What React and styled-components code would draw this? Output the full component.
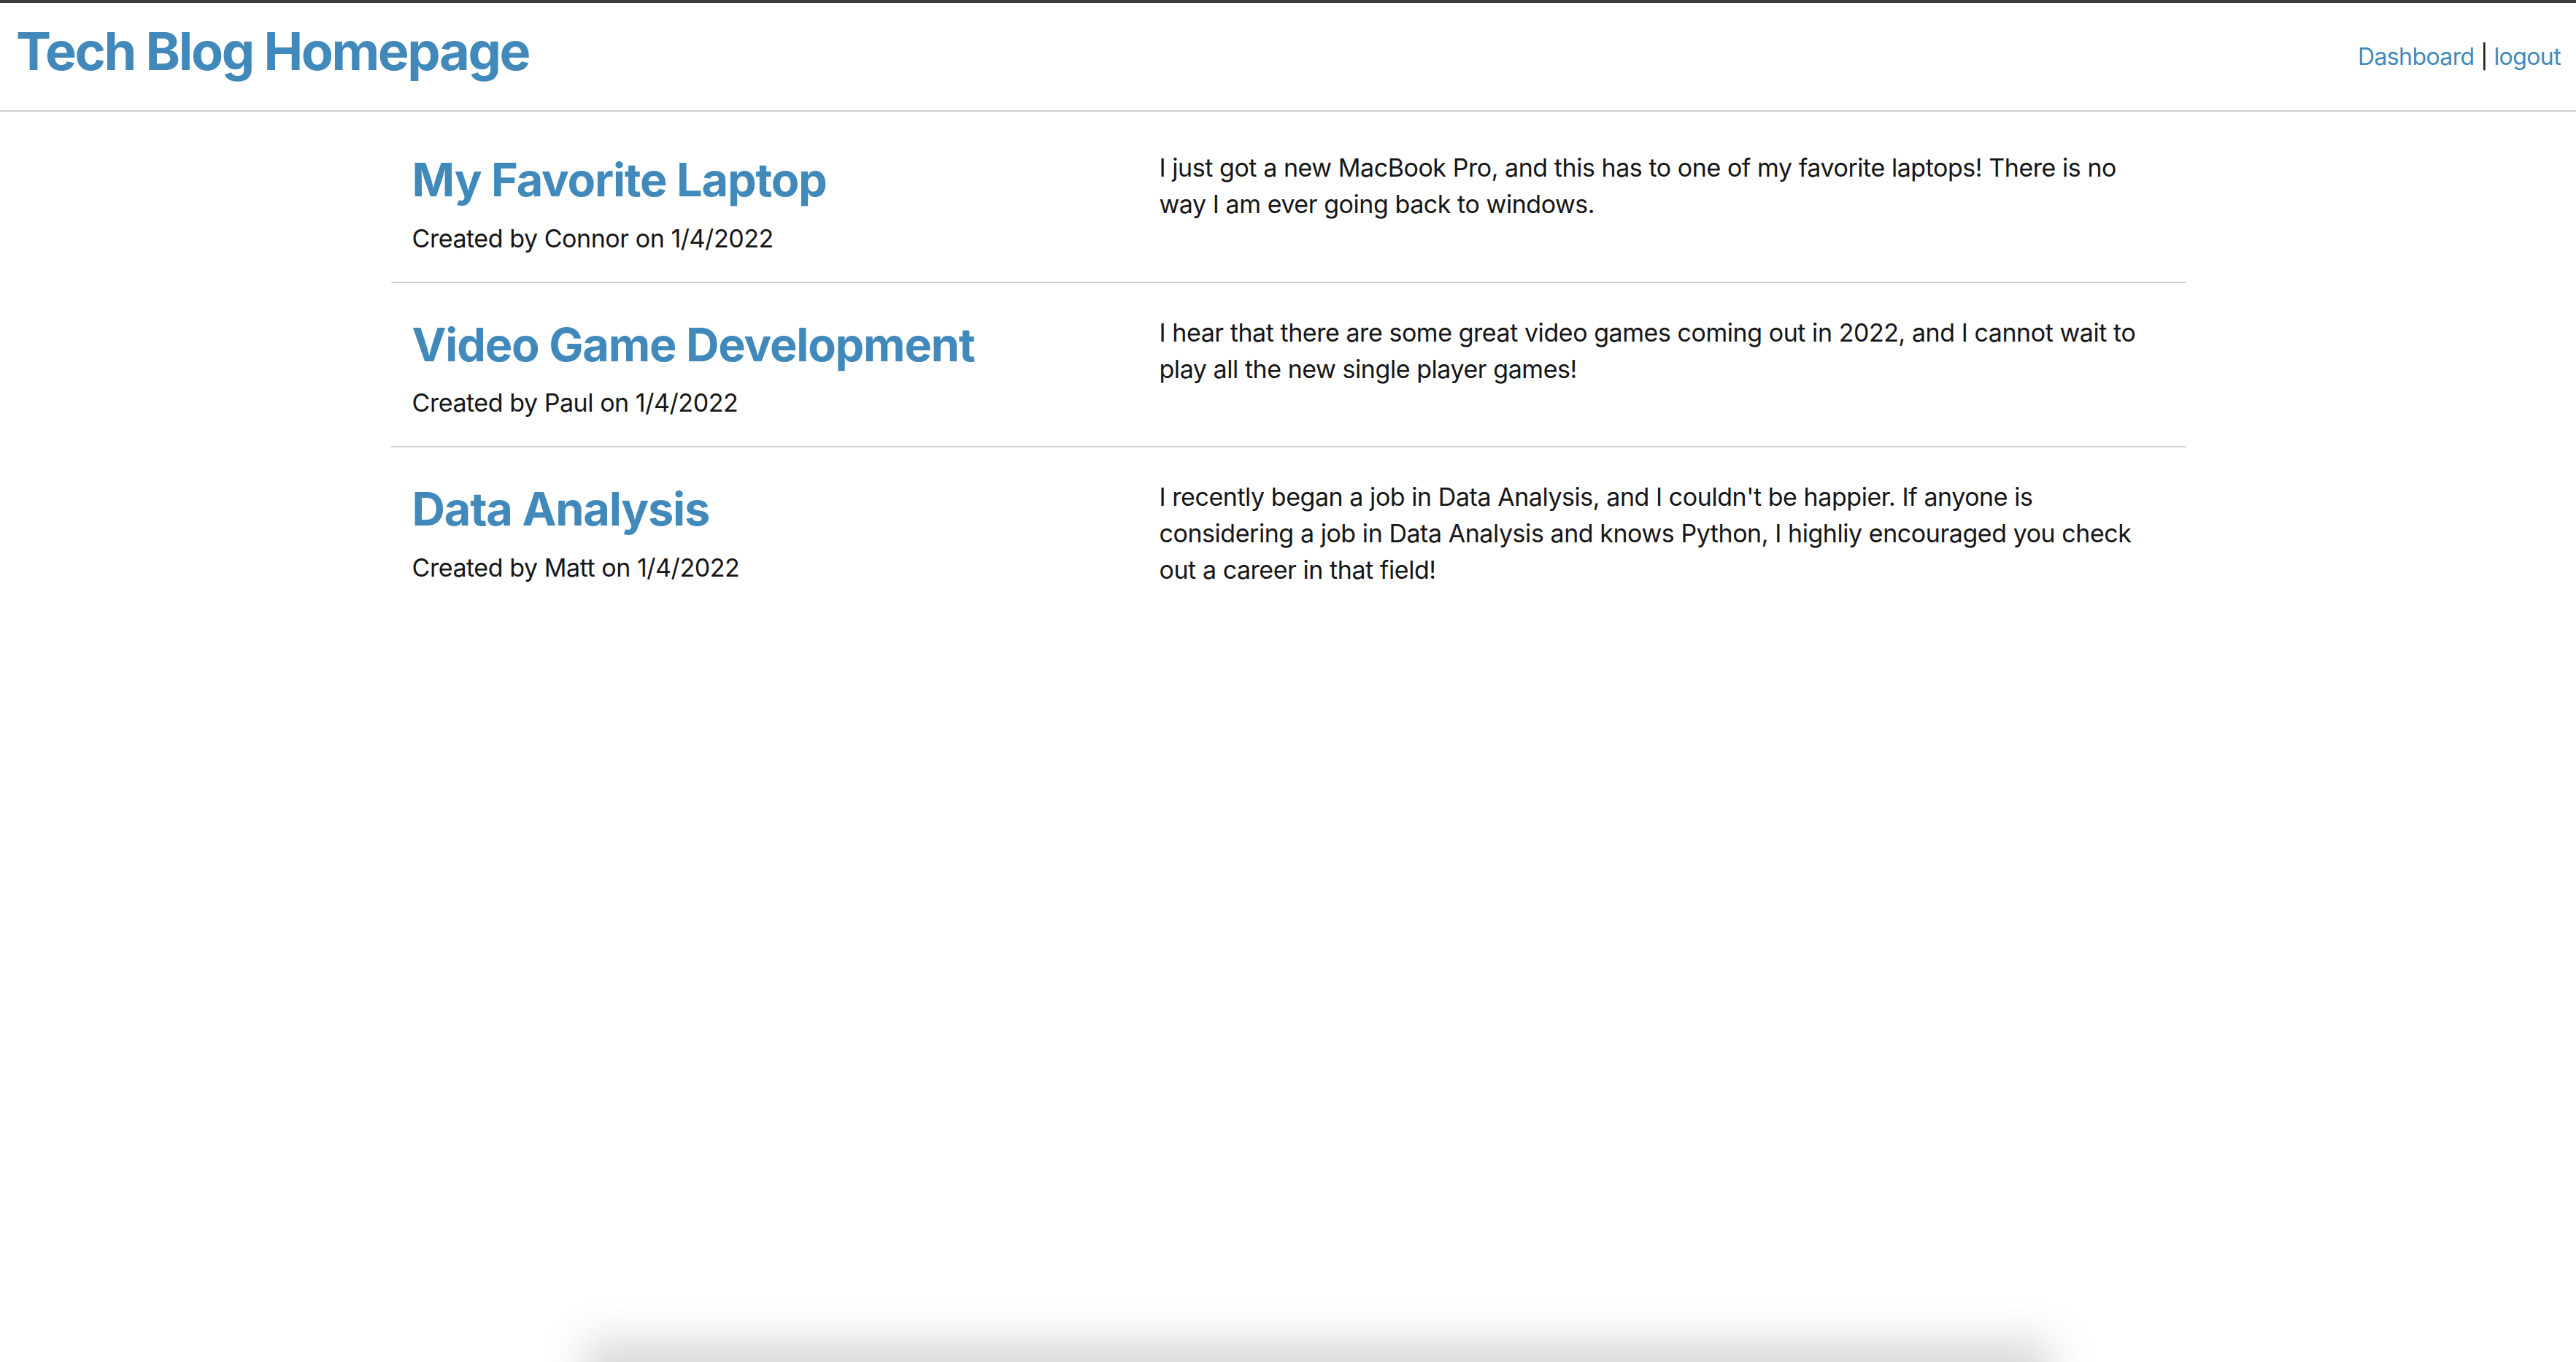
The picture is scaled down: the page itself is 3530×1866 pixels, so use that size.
import React from "react";
import styled, { createGlobalStyle } from "styled-components";

const GlobalStyle = createGlobalStyle`
  html, body {
    margin: 0;
    padding: 0;
    background: #ffffff;
  }
  body {
    font-family: Inter, "Noto Sans", "Liberation Sans", sans-serif;
    color: #161616;
    border-top: 4px solid #3d3d3f;
  }
  * { box-sizing: border-box; }
`;

const Page = styled.div`
  min-height: 1862px;
  display: flex;
  flex-direction: column;
`;

const Header = styled.header`
  display: flex;
  justify-content: space-between;
  align-items: flex-start;
  padding: 22px 21px 0 22px;
  height: 149px;
  border-bottom: 2px solid #cfcfcf;
`;

const SiteTitle = styled.h1`
  margin: 0;
  font-size: 72px;
  font-weight: 700;
  line-height: 1.22;
  letter-spacing: -2.4px;
  color: #4189bb;
`;

const Nav = styled.nav`
  margin-top: 33px;
  font-size: 32px;
  line-height: 1.21;
  letter-spacing: -0.6px;
  color: #111;
`;

const NavLink = styled.a`
  color: #4189bb;
  text-decoration: none;
  cursor: pointer;
`;

const Main = styled.main`
  width: 2459px;
  margin: 0 auto;
  padding-top: 9px;
`;

const PostRow = styled.article`
  display: grid;
  grid-template-columns: 1024px 1fr;
  align-items: start;
  padding: 43px 27px 34px 29px;
  border-bottom: ${(p) => (p.$last ? "none" : "2px solid #d0d0d0")};
`;

const PostHead = styled.div`
  display: flex;
  flex-direction: column;
  padding-top: 4px;
`;

const PostTitle = styled.h2`
  margin: 0;
  font-size: 63px;
  font-weight: 700;
  line-height: 1.2;
  letter-spacing: -1.2px;
  color: #4189bb;
`;

const PostMeta = styled.p`
  margin: 17px 0 0 0;
  font-size: 34px;
  line-height: 50px;
  letter-spacing: -0.45px;
  color: #161616;
`;

const PostBody = styled.p`
  margin: 0;
  font-size: 34px;
  line-height: 50px;
  letter-spacing: -0.45px;
  color: #161616;
`;

const DockShadow = styled.div`
  position: fixed;
  left: 800px;
  width: 2010px;
  bottom: -70px;
  height: 100px;
  background: rgba(0, 0, 0, 0.15);
  filter: blur(28px);
  pointer-events: none;
`;

const posts = [
  {
    title: "My Favorite Laptop",
    author: "Connor",
    date: "1/4/2022",
    body: "I just got a new MacBook Pro, and this has to one of my favorite laptops! There is no way I am ever going back to windows.",
  },
  {
    title: "Video Game Development",
    author: "Paul",
    date: "1/4/2022",
    body: "I hear that there are some great video games coming out in 2022, and I cannot wait to play all the new single player games!",
  },
  {
    title: "Data Analysis",
    author: "Matt",
    date: "1/4/2022",
    body: "I recently began a job in Data Analysis, and I couldn't be happier. If anyone is considering a job in Data Analysis and knows Python, I highliy encouraged you check out a career in that field!",
  },
];

export default function App() {
  return (
    <>
      <GlobalStyle />
      <Page>
        <Header>
          <SiteTitle>Tech Blog Homepage</SiteTitle>
          <Nav>
            <NavLink>Dashboard</NavLink> | <NavLink>logout</NavLink>
          </Nav>
        </Header>
        <Main>
          {posts.map((p, i) => (
            <PostRow key={p.title} $last={i === posts.length - 1}>
              <PostHead>
                <PostTitle>{p.title}</PostTitle>
                <PostMeta>
                  Created by {p.author} on {p.date}
                </PostMeta>
              </PostHead>
              <PostBody>{p.body}</PostBody>
            </PostRow>
          ))}
        </Main>
      </Page>
      <DockShadow />
    </>
  );
}
